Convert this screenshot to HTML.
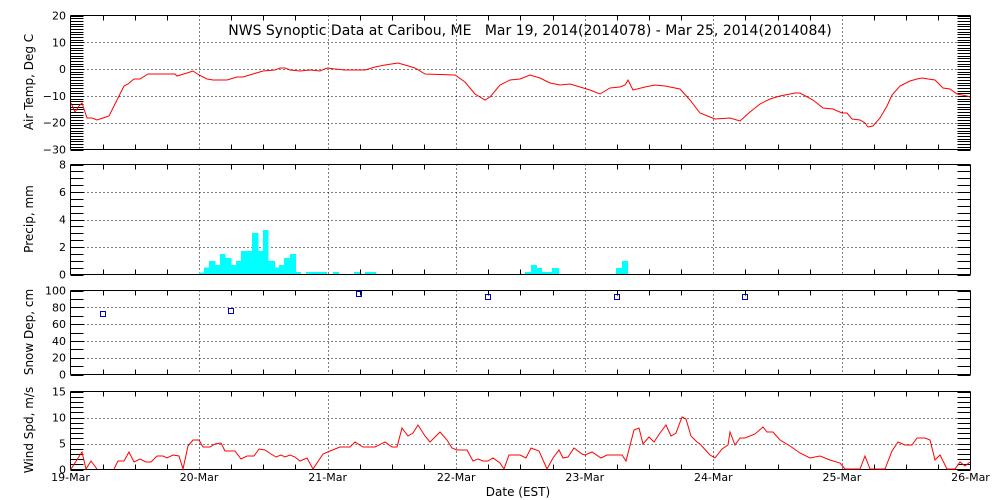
<!DOCTYPE html>
<html><head><meta charset="utf-8">
<style>
html,body{margin:0;padding:0;background:#fff;width:1000px;height:500px;overflow:hidden}
text{font-family:"DejaVu Sans","Liberation Sans",sans-serif;fill:#000}
</style></head><body>
<svg id="s" width="1000" height="500" viewBox="0 0 1000 500" xmlns="http://www.w3.org/2000/svg">
<g id="g" stroke="#000" stroke-width="1" shape-rendering="crispEdges"></g>
<g fill="#00ffff" shape-rendering="crispEdges">
<rect x="199.7" y="272.7" width="4.3" height="1.3"/>
<rect x="204" y="267.7" width="5" height="6.3"/>
<rect x="209" y="261" width="6.7" height="13"/>
<rect x="215.7" y="265" width="4.3" height="9"/>
<rect x="220" y="254" width="5.7" height="20"/>
<rect x="225.7" y="258" width="6" height="16"/>
<rect x="231.7" y="265" width="4.3" height="9"/>
<rect x="236" y="261" width="5" height="13"/>
<rect x="241" y="251" width="11" height="23"/>
<rect x="252" y="233" width="6.7" height="41"/>
<rect x="258.7" y="251" width="4.3" height="23"/>
<rect x="263" y="230" width="5.7" height="44"/>
<rect x="268.7" y="261" width="6.3" height="13"/>
<rect x="275" y="267.7" width="4" height="6.3"/>
<rect x="279" y="265" width="5" height="9"/>
<rect x="284" y="258" width="6" height="16"/>
<rect x="290" y="254" width="6" height="20"/>
<rect x="296" y="272" width="5" height="2"/>
<rect x="306" y="272" width="21" height="2"/>
<rect x="333" y="272" width="6" height="2"/>
<rect x="354" y="272" width="6" height="2"/>
<rect x="365" y="272" width="11" height="2"/>
<rect x="525" y="272" width="6" height="2"/>
<rect x="531" y="265" width="6" height="9"/>
<rect x="537" y="268" width="5" height="6"/>
<rect x="542" y="272" width="10" height="2"/>
<rect x="552" y="268" width="7" height="6"/>
<rect x="616" y="268" width="6" height="6"/>
<rect x="622" y="261" width="6" height="13"/>
</g>
<polyline fill="none" stroke="#ff0000" stroke-width="1" points="71,103 75,112 79,106 82,103 87,118 92,118 97,120 103,118 109,116 117,100 124,86 128,84 134,79 140,79 148,74 175,74 177,76 187,73 193,71 199,75 207,79 213,80 227,80 237,77 243,77 253,74 263,71 275,70 280,68 285,68 290,70 300,71 310,70 320,71 327,68 335,69 345,70 365,70 375,67 385,65 398,63 405,65 415,68 425,74 455,75 465,82 475,94 485,100 490,97 500,85 510,80 520,79 530,75 540,78 550,83 560,85 570,84 580,87 590,90 600,94 610,88 620,87 625,85 628,80 633,90 645,87 655,85 665,86 680,89 690,100 700,113 710,117 715,119 730,118 740,121 750,112 760,104 770,99 780,96 795,93 800,93 813,100 823,108 833,109 842,113 847,113 852,119 860,120 865,123 868,127 873,126 880,118 887,106 892,95 900,86 910,81 917,79 922,78 928,79 935,80 943,88 950,89 957,94 967,96 970,97"/>
<polyline fill="none" stroke="#ff0000" stroke-width="1" points="71,469 82,452 86,469 91,461 97,469"/>
<polyline fill="none" stroke="#ff0000" stroke-width="1" points="114,469 118,461 124,461 129,452 134,462 140,459 146,462 151,462 157,456 163,456 167,458 173,455 179,456 183,469 188,446 193,440 199,440 203,447 210,447 215,444 221,443 225,451 235,451 241,459 247,456 254,456 259,449 265,450 271,454 276,457 281,455 285,457 290,455 295,457 300,461 307,458 313,469 323,454 330,451 340,447 350,447 355,442 363,447 375,447 385,442 392,447 397,447 402,428 408,436 413,433 418,425 425,436 430,442 440,432 447,440 452,448 457,450 467,450 473,461 478,459 483,461 488,461 493,458 500,463 504,469 509,455 520,455 526,458 531,448 539,451 547,469 553,458 559,450 563,458 568,457 574,448 582,454 585,455 592,452 601,458 607,455 622,455 626,461 634,430 639,428 643,444 649,437 654,442 660,433 666,425 671,436 676,433 682,417 686,419 691,436 697,442 700,444 710,455 715,458 722,449 728,445 730,432 735,445 740,438 745,438 755,434 763,427 767,432 773,432 780,440 790,446 800,453 810,458 820,456 830,460 840,463 845,469 860,469 865,456 870,469 885,469 892,451 898,442 905,445 912,445 917,438 925,438 930,440 935,460 940,455 947,469 955,469 960,462 965,466 970,462"/>
<g fill="none" stroke="#0000cc" stroke-width="1" shape-rendering="crispEdges">
<rect x="100.5" y="311.5" width="5" height="5"/>
<rect x="228.5" y="308.5" width="5" height="5"/>
<rect x="356.5" y="291.5" width="5" height="5"/>
<rect x="485.5" y="294.5" width="5" height="5"/>
<rect x="614.5" y="294.5" width="5" height="5"/>
<rect x="742.5" y="294.5" width="5" height="5"/>
</g>
<text x="530" y="35" font-size="14" text-anchor="middle" xml:space="preserve">NWS Synoptic Data at Caribou, ME   Mar 19, 2014(2014078) - Mar 25, 2014(2014084)</text>
<g id="t" font-size="11" text-anchor="end"></g>
<text x="518" y="496" font-size="12" text-anchor="middle">Date (EST)</text>
<g font-size="12" text-anchor="middle">
<text transform="translate(33,82) rotate(-90)">Air Temp, Deg C</text>
<text transform="translate(33,219) rotate(-90)">Precip, mm</text>
<text transform="translate(33,332) rotate(-90)">Snow Dep, cm</text>
<text transform="translate(33,430) rotate(-90)">Wind Spd, m/s</text>
</g>
</svg>
<script>
var NS="http://www.w3.org/2000/svg",g=document.getElementById('g'),t=document.getElementById('t');
function L(x1,y1,x2,y2,d){var l=document.createElementNS(NS,'line');l.setAttribute('x1',x1);l.setAttribute('y1',y1);l.setAttribute('x2',x2);l.setAttribute('y2',y2);if(d)l.setAttribute('stroke-dasharray','1,3');g.appendChild(l);}
function T(x,y,s,a){var e=document.createElementNS(NS,'text');e.setAttribute('x',x);e.setAttribute('y',y);if(a)e.setAttribute('text-anchor',a);e.textContent=s;t.appendChild(e);}
var X0=70.5,X1=970.5,D=128.57;
var P=[{top:15.5,bot:149.5,min:-30,max:20,maj:10,mn:1,lab:['20','10','0','\u221210','\u221220','\u221230']},
{top:164.5,bot:274.5,min:0,max:8,maj:2,mn:0.5,lab:['8','6','4','2','0']},
{top:290.5,bot:374.5,min:0,max:100,maj:20,mn:10,lab:['100','80','60','40','20','0']},
{top:391.5,bot:469.5,min:0,max:15,maj:5,mn:1,lab:['15','10','5','0']}];
P.forEach(function(p){
 L(X0,p.top,X1,p.top);L(X0,p.bot,X1,p.bot);L(X0,p.top,X0,p.bot);L(X1,p.top,X1,p.bot);
 var sc=(p.bot-p.top)/(p.max-p.min);
 for(var v=p.min;v<=p.max+1e-6;v+=p.mn){var y=Math.round(p.bot-(v-p.min)*sc)+0.5;L(X0,y,X0+13,y);L(X1-13,y,X1,y);}
 var i=0;for(var v=p.max;v>=p.min-1e-6;v-=p.maj){var y=p.bot-(v-p.min)*sc;if(v>p.min&&v<p.max)L(X0+13,Math.round(y)+0.5,X1-13,Math.round(y)+0.5,1);T(66,y+4,p.lab[i++]);}
 for(var k=1;k<28;k++){var x=Math.round(X0+k*D/4)+0.5;if(k%4==0)L(x,p.top,x,p.bot,1);else{L(x,p.top,x,p.top+5);L(x,p.bot-5,x,p.bot);}}
});
var days=['19-Mar','20-Mar','21-Mar','22-Mar','23-Mar','24-Mar','25-Mar','26-Mar'];
days.forEach(function(d,i){T(X0+i*D,481,d,'middle');});
</script>
</body></html>
